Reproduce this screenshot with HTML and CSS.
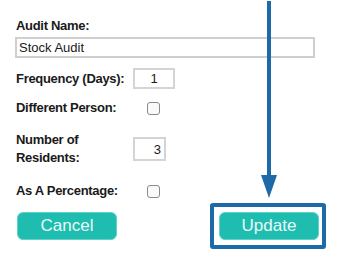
FILE: index.html
```html
<!DOCTYPE html>
<html lang="en">
<head>
    <meta charset="UTF-8">
    <title>Edit Audit</title>
    <link rel="stylesheet" href="styles.css">
</head>
<body>
    <form class="audit-form" onsubmit="return false">
        <div class="form-group">
            <label for="auditName">Audit Name:</label>
            <input type="text" id="auditName" class="text-input" value="Stock Audit">
        </div>

        <div class="form-row row-frequency">
            <label for="frequency">Frequency (Days):</label>
            <input type="text" id="frequency" class="num-input centered" value="1">
        </div>

        <div class="form-row row-person">
            <label for="differentPerson">Different Person:</label>
            <span class="checkbox" id="differentPerson"></span>
        </div>

        <div class="form-row row-residents">
            <label for="residents">Number of<br>Residents:</label>
            <input type="text" id="residents" class="num-input short right" value="3">
        </div>

        <div class="form-row row-percentage">
            <label for="percentage">As A Percentage:</label>
            <span class="checkbox" id="percentage"></span>
        </div>

        <div class="actions">
            <button type="button" class="btn">Cancel</button>
            <div class="highlight">
                <button type="button" class="btn">Update</button>
            </div>
        </div>
    </form>

    <!-- annotation arrow pointing at Update -->
    <svg class="arrow" width="20" height="200" viewBox="0 0 20 200">
        <rect x="7" y="1" width="4" height="178" fill="#1c6aa8"/>
        <polygon points="1,175 17,175 9,198" fill="#1c6aa8"/>
    </svg>
</body>
</html>
```

FILE: styles.css
```css
body {
    margin: 0;
    padding: 0;
    width: 342px;
    height: 262px;
    position: relative;
    background: #fff;
    font-family: "Liberation Sans", Arial, sans-serif;
    color: #1a1a1a;
}
.audit-form {
    padding: 17px 0 0 16px;
}
label {
    font-weight: bold;
    font-size: 13px;
    line-height: 18px;
    letter-spacing: -0.3px;
}
.form-group label {
    display: block;
    margin-bottom: 2px;
}
.text-input {
    display: block;
    box-sizing: border-box;
    width: 300px;
    height: 21px;
    margin-left: -1px;
    padding: 0 2px;
    border: 2px solid #cfcfcf;
    font-family: "Liberation Sans", Arial, sans-serif;
    font-size: 13px;
    color: #1a1a1a;
    outline: none;
}
.form-row {
    display: grid;
    grid-template-columns: 117px auto;
    align-items: center;
}
.row-frequency {
    margin-top: 10px;
}
.row-person {
    margin-top: 10px;
}
.row-residents {
    margin-top: 14px;
}
.row-percentage {
    margin-top: 15px;
}
.num-input {
    box-sizing: border-box;
    width: 42px;
    height: 21px;
    padding: 0 3px;
    border: 2px solid #d4d4d4;
    font-family: "Liberation Sans", Arial, sans-serif;
    font-size: 13px;
    color: #1a1a1a;
    outline: none;
}
.num-input.short {
    width: 33px;
    height: 24px;
}
.centered {
    text-align: center;
}
.right {
    text-align: right;
}
.checkbox {
    display: block;
    box-sizing: border-box;
    width: 13px;
    height: 13px;
    margin-left: 14px;
    border: 1px solid #8a8a8a;
    border-radius: 3px;
    background: #fafafa;
}
.actions {
    display: flex;
    justify-content: space-between;
    align-items: center;
    width: 309px;
    margin-top: 3px;
    padding-left: 1px;
}
.btn {
    box-sizing: border-box;
    width: 100px;
    height: 28px;
    border: 1px solid #5fd3c8;
    border-radius: 6px;
    background: #1fbcb0;
    color: #eafaf8;
    font-family: "Liberation Sans", Arial, sans-serif;
    font-size: 17px;
    cursor: pointer;
}
.highlight {
    border: 4px solid #1c6aa8;
    border-radius: 3px;
    padding: 5px 3px 5px 5px;
}
.arrow {
    position: absolute;
    left: 260px;
    top: 0;
}
```
